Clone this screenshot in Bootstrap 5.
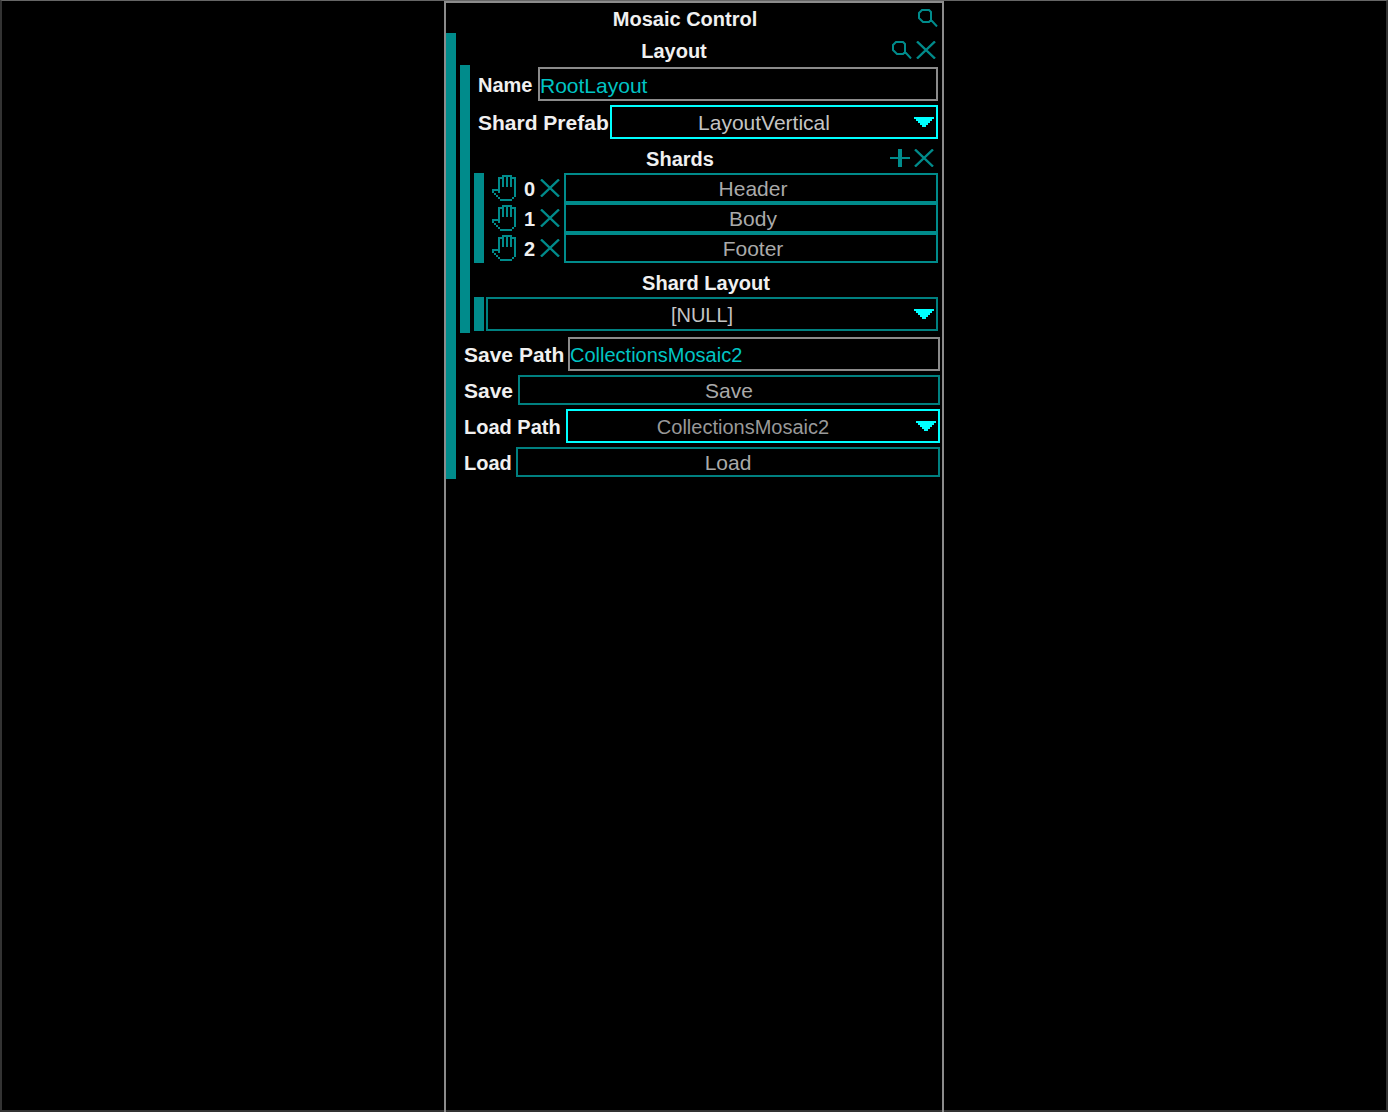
<!DOCTYPE html>
<html lang="en">
<head>
<meta charset="utf-8">
<meta name="viewport" content="width=device-width, initial-scale=1">
<title>Mosaic Control</title>
<link href="https://cdn.jsdelivr.net/npm/bootstrap@5.3.0/dist/css/bootstrap.min.css" rel="stylesheet">
<style>
  :root { --teal: #008b8b; --line: #8b8b8b; }
  body { background: #000; color: #f0f0f0; font: 20px/24px "Liberation Sans", Arial, sans-serif; }
  .stage { border: 2px solid #333; border-top: 1px solid #666; }
  .panel { max-width: 500px; border: 2px solid var(--line); border-bottom: 0; margin-bottom: -2px; }
  .bar { border-left: 10px solid var(--teal); }
  .level { padding: 0 2px 2px 4px; }
  .fields { padding-top: 2px; }
  .stack { gap: 4px; }
  .title-row { gap: 4px; padding-right: 4px; }
  .title-row h1, .title-row h2, .title-row h3 { font-size: 20px; line-height: 24px; font-weight: 700; padding-top: 2px; }
  .title-main { height: 30px; padding-left: 10px; }
  .title-sub { height: 32px; padding-top: 2px; }
  .title-group { height: 34px; padding-top: 4px; }
  .title-plain { padding-right: 0; }
  .field-label { padding: 2px 0 0 4px; font-weight: 700; flex: none; white-space: nowrap; }
  .text-l { font-size: 21px; }
  .w-name { width: 64px; } .w-prefab { width: 136px; } .w-savepath { width: 108px; }
  .w-save { width: 58px; } .w-loadpath { width: 106px; } .w-load { width: 56px; }
  .box { height: 34px; border-width: 2px; border-style: solid; border-radius: 0; background-color: #000; min-width: 0; line-height: 24px; font-size: 20px; }
  .box.text-l { font-size: 21px; }
  .box:focus { background-color: #000; box-shadow: none; }
  .box-input, .box-input:focus { padding: 3px 0 0 0; border-color: var(--line); color: #00c4c4; }
  .box-select, .box-select:focus {
    background-image: url("data:image/svg+xml,%3csvg xmlns='http://www.w3.org/2000/svg' viewBox='0 0 10 5' shape-rendering='crispEdges'%3e%3cpath fill='%230ff' d='M0 0h10v1H9v1H8v1H7v1H6v1H4V4H3V3H2V2H1V1H0z'/%3e%3c/svg%3e");
    background-position: right 2px top 10px; background-size: 20px 10px;
    padding: 2px 20px 0 0; text-align: center; text-align-last: center;
    border-color: #0ff; color: #c4c4c4;
  }
  .box-select.quiet { border-color: #008080; }
  .box-select.dim { color: #999; }
  .box-btn { height: 30px; border: 2px solid #008080; border-radius: 0; background: #000; color: #aaa; padding: 2px 0 0 0; line-height: 24px; }
  .box-btn:hover { color: #fff; border-color: #0ff; }
  .shard { height: 30px; padding-left: 8px; }
  .shard .box-btn { border-color: var(--teal); margin-left: 4px; padding-left: 4px; }
  .shard-num { width: 11px; margin: 2px 5px 0 8px; font-weight: 700; }
  .nested-select { padding-left: 2px; }
  .tool { border: 0; padding: 0; background: none; color: var(--teal); display: flex; flex: none; }
  .tool svg { display: block; fill: currentColor; }
</style>
<script src="https://cdn.jsdelivr.net/npm/bootstrap@5.3.0/dist/js/bootstrap.bundle.min.js"></script>
</head>
<body>
<svg class="d-none" aria-hidden="true">
  <symbol id="i-search" viewBox="0 0 20 18"><path fill="none" stroke="currentColor" stroke-width="2" d="M4 1h7l2 2v8l-2 2H5L1 9V4zM12 12l2 0l5 5.500"/></symbol>
  <symbol id="i-close" viewBox="0 0 20 18"><path fill="none" stroke="currentColor" stroke-width="2.400" d="M1 .5L19 17.500M19 .5L1 17.500"/></symbol>
  <symbol id="i-plus" viewBox="0 0 20 18"><path d="M8 0h4v18H8zM0 8h20v2H0z"/></symbol>
  <symbol id="i-hand" viewBox="0 0 12 13"><path shape-rendering="crispEdges" d="M5 0h5v1h2v10h-1V2h-1v4H9V1H8v5H7V1H6v5H5V2H4v7H3V1h2zM0 7h3v1H1v1H0zM1 9h1v1H1zM2 10h1v1H2zM3 11h1v1H3zM10 11h1v1h-1zM4 12h6v1H4z"/></symbol>
</svg>

<div class="stage min-vh-100 d-flex flex-column">
  <main class="panel w-100 mx-auto flex-grow-1">
    <header class="title-row title-main d-flex align-items-center">
      <h1 class="flex-grow-1 text-center m-0">Mosaic Control</h1>
      <button class="tool" type="button" aria-label="Search"><svg width="20" height="18"><use href="#i-search"/></svg></button>
    </header>

    <form class="bar level d-flex flex-column stack">
      <section>
        <div class="title-row title-sub d-flex align-items-center">
          <h2 class="flex-grow-1 text-center m-0">Layout</h2>
          <button class="tool" type="button" aria-label="Search layout"><svg width="20" height="18"><use href="#i-search"/></svg></button>
          <button class="tool" type="button" aria-label="Remove layout"><svg width="20" height="18"><use href="#i-close"/></svg></button>
        </div>

        <div class="bar level">
          <div class="fields d-flex flex-column stack">
            <div class="d-flex align-items-center">
              <label class="field-label w-name" for="name">Name</label>
              <input class="form-control box box-input text-l" id="name" type="text" value="RootLayout">
            </div>
            <div class="d-flex align-items-center">
              <label class="field-label w-prefab text-l" for="prefab">Shard Prefab</label>
              <select class="form-select box box-select text-l" id="prefab"><option>LayoutVertical</option></select>
            </div>
          </div>

          <div class="title-row title-group d-flex align-items-center">
            <h3 class="flex-grow-1 text-center m-0">Shards</h3>
            <button class="tool" type="button" aria-label="Add shard"><svg width="20" height="18"><use href="#i-plus"/></svg></button>
            <button class="tool" type="button" aria-label="Remove all shards"><svg width="20" height="18"><use href="#i-close"/></svg></button>
          </div>
          <div class="bar">
            <div class="shard d-flex align-items-center">
              <button class="tool" type="button" aria-label="Move shard 0"><svg width="24" height="26"><use href="#i-hand"/></svg></button>
              <span class="shard-num">0</span>
              <button class="tool" type="button" aria-label="Remove shard 0"><svg width="20" height="18"><use href="#i-close"/></svg></button>
              <button class="btn box-btn text-l flex-grow-1" type="button">Header</button>
            </div>
            <div class="shard d-flex align-items-center">
              <button class="tool" type="button" aria-label="Move shard 1"><svg width="24" height="26"><use href="#i-hand"/></svg></button>
              <span class="shard-num">1</span>
              <button class="tool" type="button" aria-label="Remove shard 1"><svg width="20" height="18"><use href="#i-close"/></svg></button>
              <button class="btn box-btn text-l flex-grow-1" type="button">Body</button>
            </div>
            <div class="shard d-flex align-items-center">
              <button class="tool" type="button" aria-label="Move shard 2"><svg width="24" height="26"><use href="#i-hand"/></svg></button>
              <span class="shard-num">2</span>
              <button class="tool" type="button" aria-label="Remove shard 2"><svg width="20" height="18"><use href="#i-close"/></svg></button>
              <button class="btn box-btn text-l flex-grow-1" type="button">Footer</button>
            </div>
          </div>

          <div class="title-row title-group title-plain d-flex align-items-center">
            <h3 class="flex-grow-1 text-center m-0"><label for="shard-layout">Shard Layout</label></h3>
          </div>
          <div class="bar nested-select">
            <select class="form-select box box-select quiet" id="shard-layout"><option>[NULL]</option></select>
          </div>
        </div>
      </section>

      <div class="d-flex align-items-center">
        <label class="field-label w-savepath text-l" for="save-path">Save Path</label>
        <input class="form-control box box-input" id="save-path" type="text" value="CollectionsMosaic2">
      </div>
      <div class="d-flex align-items-center">
        <label class="field-label w-save text-l" for="save">Save</label>
        <button class="btn box-btn text-l flex-grow-1" id="save" type="button">Save</button>
      </div>
      <div class="d-flex align-items-center">
        <label class="field-label w-loadpath" for="load-path">Load Path</label>
        <select class="form-select box box-select dim" id="load-path"><option>CollectionsMosaic2</option></select>
      </div>
      <div class="d-flex align-items-center">
        <label class="field-label w-load" for="load">Load</label>
        <button class="btn box-btn text-l flex-grow-1" id="load" type="button">Load</button>
      </div>
    </form>
  </main>
</div>
</body>
</html>
